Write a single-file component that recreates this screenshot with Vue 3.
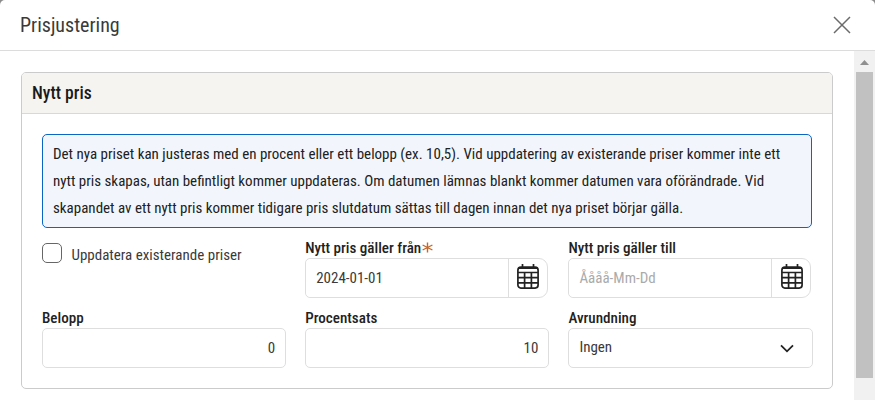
<!-- src/components/PriceAdjustmentDialog.vue -->
<template>
    <div class="dialog">
        <header class="dialog-header">
            <h1>Prisjustering</h1>
            <button class="close" type="button" aria-label="Stäng">
                <svg width="18" height="18" viewBox="0 0 18 18">
                    <path d="M1 1L17 17M17 1L1 17" />
                </svg>
            </button>
        </header>

        <div class="dialog-body">
            <section class="card">
                <h2 class="card-title">Nytt pris</h2>

                <div class="card-content">
                    <div class="info">
                        <div v-for="line in infoLines" :key="line">{{ line }}</div>
                    </div>

                    <div class="fields">
                        <label class="checkbox">
                            <input v-model="form.updateExisting" type="checkbox" />
                            <span>Uppdatera existerande priser</span>
                        </label>

                        <!-- Date fields -->
                        <div v-for="date in dateFields" :key="date.key" class="field">
                            <label :for="date.key">{{ date.label }}<svg v-if="date.required" class="required" width="11"
                                    height="11" viewBox="0 0 11 11">
                                    <path d="M5.5 0.5V10.5M0.6 3L10.4 8M10.4 3L0.6 8" />
                                </svg></label>
                            <div class="date-input">
                                <input :id="date.key" v-model="form[date.key]" type="text" placeholder="Åååå-Mm-Dd" />
                                <button type="button" aria-label="Kalender">
                                    <svg width="22" height="25" viewBox="0 0 22 25">
                                        <path d="M5.5 0V4M16.5 0V4" />
                                        <rect x="0.9" y="3.2" width="20.2" height="20.9" rx="3" />
                                        <path d="M1.5 4.2H20.5M1 8.5H21M1 13.7H21M1 18.9H21M7.6 8.5V24M14.4 8.5V24" />
                                    </svg>
                                </button>
                            </div>
                        </div>

                        <!-- Number fields -->
                        <div v-for="number in numberFields" :key="number.key" class="field">
                            <label :for="number.key">{{ number.label }}</label>
                            <input :id="number.key" v-model="form[number.key]" class="number" type="text" />
                        </div>

                        <div class="field">
                            <label for="rounding">Avrundning</label>
                            <div class="select">
                                <select id="rounding" v-model="form.rounding">
                                    <option>Ingen</option>
                                </select>
                                <svg width="14" height="9" viewBox="0 0 14 9">
                                    <path d="M1 1.3L7 7.3L13 1.3" />
                                </svg>
                            </div>
                        </div>
                    </div>
                </div>
            </section>

            <div class="scrollbar">
                <div class="arrow"></div>
                <div class="thumb"></div>
            </div>
        </div>
    </div>
</template>


<script setup>
import { reactive } from 'vue';

const form = reactive({
    updateExisting: false,
    validFrom: '2024-01-01',
    validTo: '',
    amount: '0',
    percent: '10',
    rounding: 'Ingen',
});

const infoLines = [
    'Det nya priset kan justeras med en procent eller ett belopp (ex. 10,5). Vid uppdatering av existerande priser kommer inte ett',
    'nytt pris skapas, utan befintligt kommer uppdateras. Om datumen lämnas blankt kommer datumen vara oförändrade. Vid',
    'skapandet av ett nytt pris kommer tidigare pris slutdatum sättas till dagen innan det nya priset börjar gälla.',
];

const dateFields = [
    { key: 'validFrom', label: 'Nytt pris gäller från', required: true },
    { key: 'validTo', label: 'Nytt pris gäller till', required: false },
];

const numberFields = [
    { key: 'amount', label: 'Belopp' },
    { key: 'percent', label: 'Procentsats' },
];
</script>


<style>
body {
    background: #8c8c8c;
}
</style>

<style scoped>
.dialog,
.dialog * {
    box-sizing: border-box;
}

.dialog {
    height: 400px;
    display: flex;
    flex-direction: column;
    overflow: hidden;
    border-radius: 5px 5px 0 0;
    background: #fff;
    color: #3a3a3a;
    font-family: "Roboto Condensed", Roboto, sans-serif;
    font-stretch: 75%;
    font-size: 15px;
}

.dialog-header {
    height: 51px;
    display: flex;
    align-items: center;
    justify-content: space-between;
    padding: 0 24px 0 20px;
    border-bottom: 1px solid #dcdcdc;
}

h1 {
    margin: 0;
    font-size: 20px;
    font-weight: 400;
}

button {
    padding: 0;
    border: 0;
    background: none;
}

svg {
    display: block;
    fill: none;
}

.close svg {
    stroke: #6b6b6b;
    stroke-width: 1.5;
}

.dialog-body {
    flex: 1;
    min-height: 0;
    display: flex;
    justify-content: space-between;
    padding-left: 21px;
}

.card {
    width: 812px;
    height: 317px;
    margin-top: 21px;
    border: 1px solid #cbcbcb;
    border-radius: 5px;
    overflow: hidden;
}

.card-title {
    height: 41px;
    margin: 0;
    padding-left: 10px;
    border-bottom: 1px solid #d8d8d4;
    background: #f5f4f0;
    color: #1a1a1a;
    font-size: 17.6px;
    font-weight: 500;
    line-height: 40px;
}

.card-content {
    padding: 20px 19px 0 20px;
}

.info {
    width: 770px;
    height: 94px;
    padding: 6px 10px;
    border: 1px solid #0a66c2;
    border-radius: 5px;
    background: #f2f6fc;
    color: #212121;
    line-height: 27px;
    white-space: nowrap;
}

.fields {
    display: grid;
    grid-template-columns: 244.2px 244.2px 244.4px;
    grid-auto-rows: 59px;
    gap: 11px 19px;
    padding-top: 11px;
}

.checkbox {
    display: flex;
    align-items: flex-start;
    padding-top: 4px;
}

.checkbox input {
    width: 20px;
    height: 20px;
    margin: 0 9.5px 0 0;
    padding: 0;
    appearance: none;
    border: 1px solid #666;
    border-radius: 5px;
}

.checkbox span {
    line-height: 24px;
}

.field label {
    display: flex;
    height: 19px;
    color: #222;
    font-size: 15.1px;
    font-weight: 500;
    line-height: 19px;
}

.required {
    margin: 3px 0 0 1px;
    stroke: #c4682b;
    stroke-width: 1.4;
}

input,
select {
    width: 100%;
    height: 40px;
    padding: 0 10px;
    border: 1px solid #dedede;
    border-radius: 5px;
    outline: none;
    background: #fff;
    color: #3a3a3a;
    font: inherit;
}

input::placeholder {
    color: #aaa;
    opacity: 1;
}

.number {
    text-align: right;
}

.date-input {
    width: 243px;
    height: 40px;
    display: flex;
    border: 1px solid #dedede;
    border-radius: 5px 9px 9px 5px;
}

.date-input input {
    flex: 1;
    height: 38px;
    min-width: 0;
    border: 0;
}

.date-input button {
    width: 39px;
    display: flex;
    justify-content: center;
    padding: 5px 0 0 0.4px;
    border-left: 1px solid #dedede;
}

.date-input svg {
    stroke: #222;
    stroke-width: 1.7;
}

.select {
    display: flex;
    align-items: center;
}

.select select {
    padding-bottom: 2px;
    appearance: none;
}

.select svg {
    flex: none;
    margin-left: -33px;
    stroke: #222;
    stroke-width: 1.8;
}

.scrollbar {
    width: 21px;
    display: flex;
    flex-direction: column;
    align-items: center;
    background: #f1f1f1;
}

.arrow {
    width: 9px;
    height: 5px;
    margin: 9px 0 7px;
    background: #8f8f8f;
    clip-path: polygon(50% 0, 100% 100%, 0 100%);
}

.thumb {
    width: 17px;
    height: 306px;
    background: #c1c1c1;
}
</style>
